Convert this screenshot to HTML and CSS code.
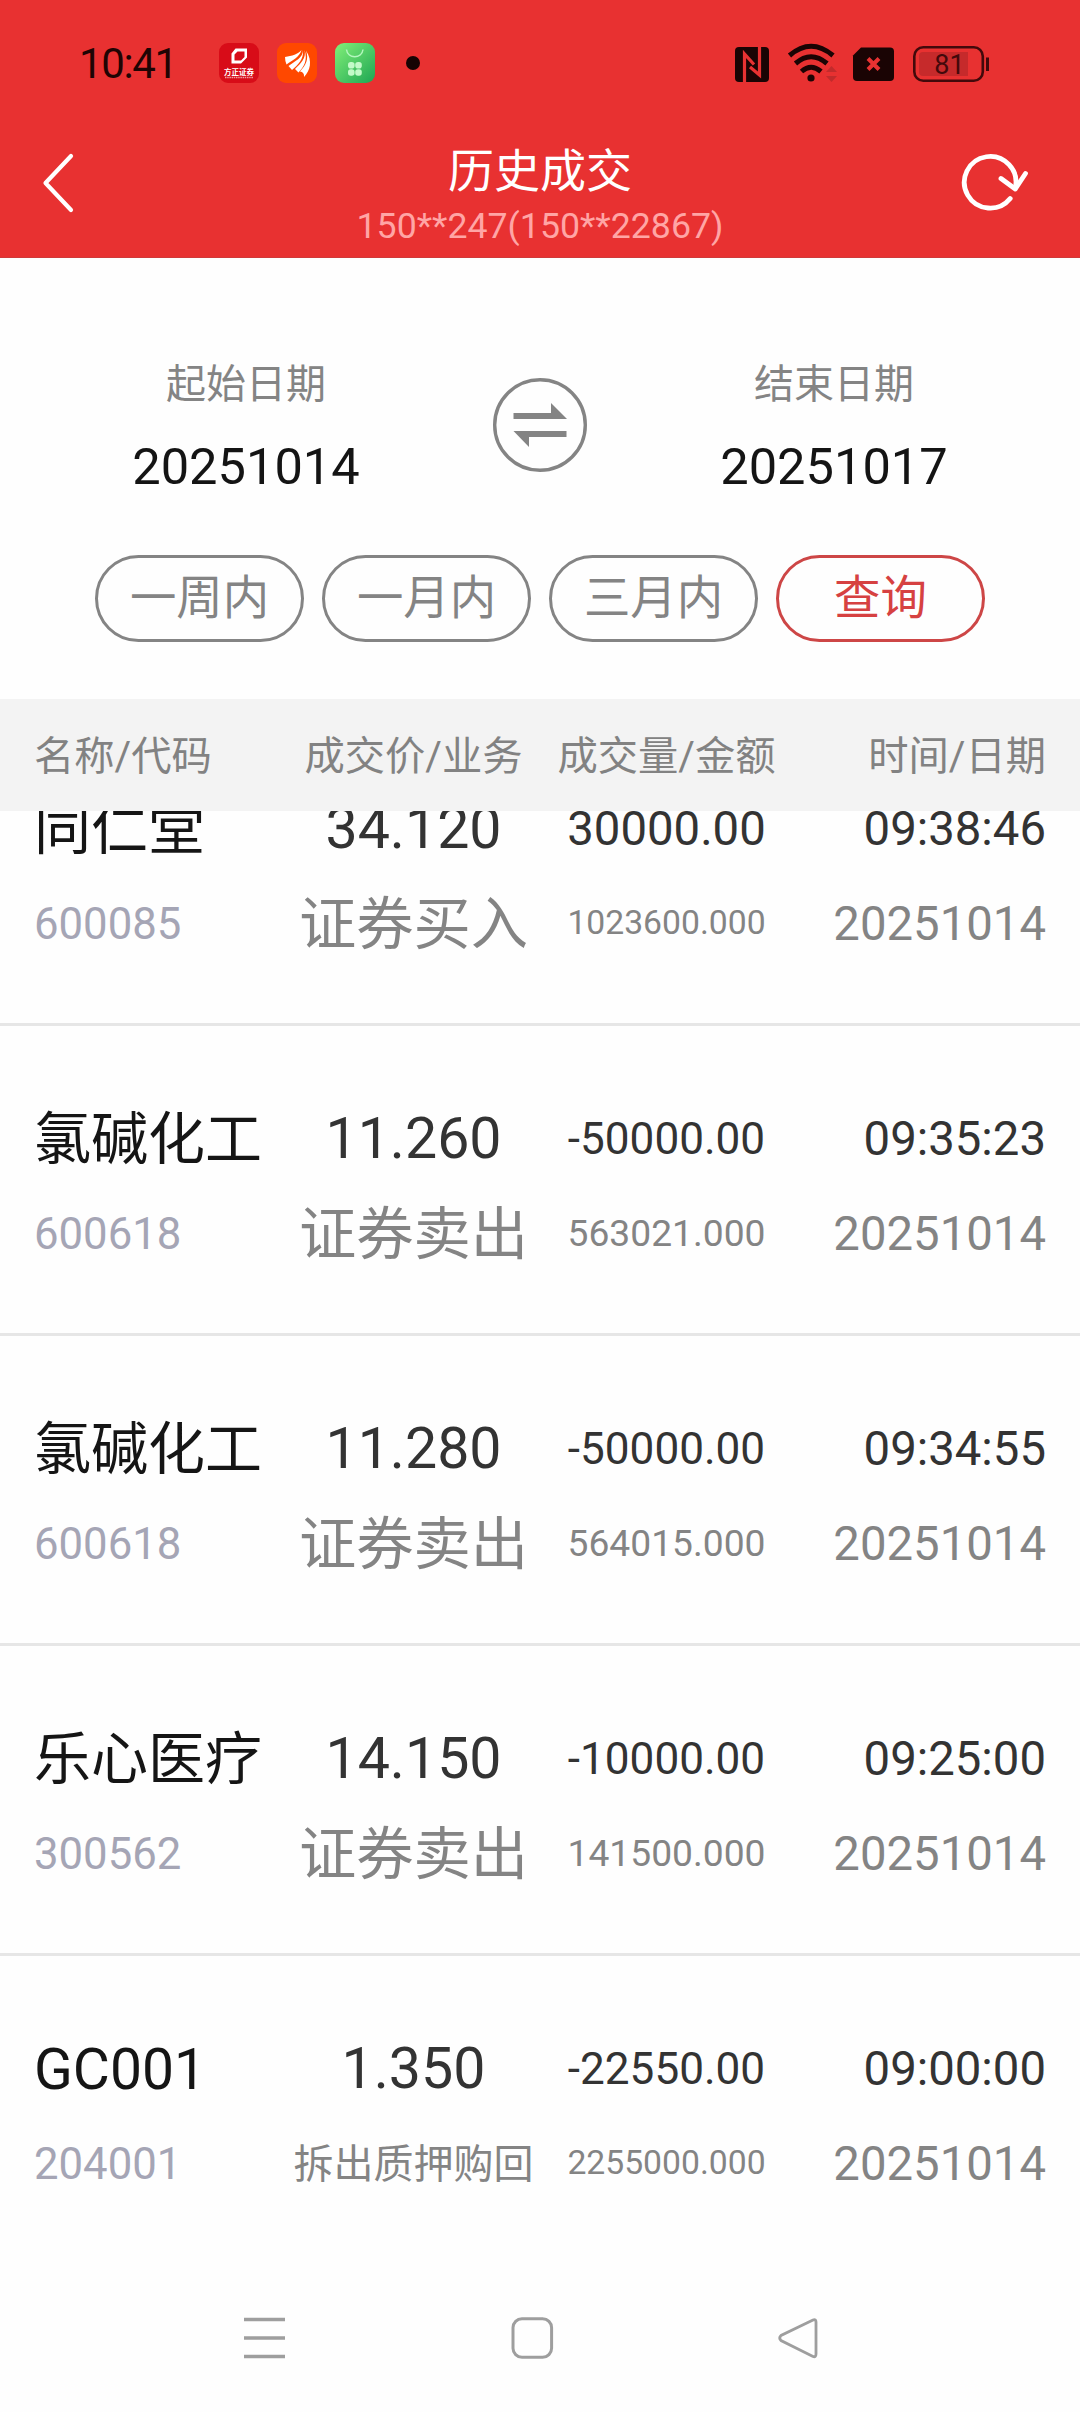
FILE: index.html
```html
<!DOCTYPE html>
<html lang="zh-CN">
<head>
<meta charset="utf-8">
<title>历史成交</title>
<link rel="stylesheet" href="styles.css">
</head>
<body>
<header class="top">
  <div class="status">
    <span class="clock">10:41</span>
    <div class="apps">
      <svg class="app" viewBox="0 0 40 40">
        <rect width="40" height="40" rx="9" fill="#d80c18"/>
        <path d="M16.500 5.500H28V14.500L22 20.500H12.500V10.500zM18.500 8.500L15.500 11.500V17.500h6.500l3.500-3.500V8.500z" fill="#fff" fill-rule="evenodd"/>
        <text x="20" y="31.500" text-anchor="middle" class="app-name">方正证券</text>
        <path d="M6 34.500h28" stroke="#fff" stroke-width="1.300" stroke-dasharray="1.500 .7" opacity=".6"/>
      </svg>
      <svg class="app" viewBox="0 0 40 40">
        <rect width="40" height="40" rx="9" fill="#ff4800"/>
        <path d="M8 14C15 13 21 11 24.500 7 22.500 14 16 17 9.500 21.500Q8 18 8 14zM26 7C26 15 18 18 11.500 23l3.500 4C21 22 27 16 26 7zM27.500 7C29.500 15 24 20 18 26l3.500 3.500C27 24 31 17 27.500 7zM29 7.500C36 18 33 28 27 34Q27.500 29 23 28.500C29 22 32 16 29 7.500z" fill="#fff"/>
      </svg>
      <svg class="app" viewBox="0 0 40 40">
        <defs><linearGradient id="leaf" x1="0" y1="0" x2="1" y2="1"><stop offset="0" stop-color="#82ef78"/><stop offset="1" stop-color="#1da653"/></linearGradient></defs>
        <rect width="40" height="40" rx="9" fill="url(#leaf)"/>
        <path d="M11.500 6.500C12.500 16 27 16 28 6.500" fill="none" stroke="#b4f7bf" stroke-width="1.500"/>
        <g fill="#c3fac8"><rect x="13" y="19" width="6.600" height="6.600" rx="2.800"/><rect x="20.200" y="19" width="6.600" height="6.600" rx="2.800"/><rect x="13" y="26.200" width="6.600" height="6.600" rx="2.800"/><rect x="20.200" y="26.200" width="6.600" height="6.600" rx="2.800"/></g>
      </svg>
    </div>
    <span class="dot"></span>
    <svg class="signals" viewBox="0 0 256 42">
      <rect x="0" y="5" width="34" height="35" rx="4" fill="#1a0404"/>
      <path d="M9.500 40V12L19 22.500M24.500 5V33L15 25" fill="none" stroke="#e83232" stroke-width="3.200"/>
      <g fill="none" stroke="#1a0404" stroke-width="5"><path d="M54.500 13.500Q76 -5 98 13.500"/><path d="M60.500 21.500Q76 8 92 21.500"/><path d="M66.500 29.500Q76 21 86 29.500"/></g>
      <circle cx="76" cy="36" r="3.600" fill="#1a0404"/>
      <path d="M91 30l5.500-6 5.500 6zM91 34l5.500 6 5.500-6z" fill="#c22b2c"/>
      <path d="M126 5.500H155q4 0 4 4V35q0 4-4 4H122q-4 0-4-4V13.500z" fill="#1a0404"/>
      <path d="M133 16.500l11 11M144 16.500l-11 11" stroke="#e83232" stroke-width="4"/>
      <rect x="179.300" y="5.300" width="68.500" height="33.400" rx="9" fill="none" stroke="#43090b" stroke-width="2.600"/>
      <path d="M188 10H233V34H188q-4 0-4-4V14q0-4 4-4z" fill="#c62a2b"/>
      <path d="M252.500 15.500V29" stroke="#43090b" stroke-width="3"/>
      <text x="214.500" y="31.800" text-anchor="middle" class="charge">81</text>
    </svg>
  </div>
  <div class="bar">
    <svg class="back" viewBox="0 0 40 64"><path d="M31 5L5.500 32 31 59" fill="none" stroke="#fff" stroke-width="4.200" stroke-linecap="round" stroke-linejoin="round"/></svg>
    <div class="heading">
      <h1>历史成交</h1>
      <p>150**247(150**22867)</p>
    </div>
    <svg class="reload" viewBox="0 0 70 64"><g fill="none" stroke="#fff" stroke-width="4.800" stroke-linecap="round" stroke-linejoin="round"><path d="M51.200 48.500A25.800 25.800 0 1 1 56.300 38"/><path d="M42 28.500L56.300 39 66.500 23.500"/></g></svg>
  </div>
</header>

<section class="filter">
  <div class="dates">
    <div class="date"><span class="label">起始日期</span><span class="value">20251014</span></div>
    <svg class="swap" viewBox="0 0 96 96"><circle cx="48" cy="48" r="45.300" fill="none" stroke="#848484" stroke-width="3.400"/><path d="M21.500 36H59V26L75 42H21.500zM74.500 54H21.500L37 70V60H74.500z" fill="#848484"/></svg>
    <div class="date"><span class="label">结束日期</span><span class="value">20251017</span></div>
  </div>
  <div class="pills">
    <button class="pill">一周内</button>
    <button class="pill">一月内</button>
    <button class="pill">三月内</button>
    <button class="pill query">查询</button>
  </div>
</section>

<div class="columns table-head">
  <span>名称/代码</span><span>成交价/业务</span><span>成交量/金额</span><span>时间/日期</span>
</div>

<main class="list">
  <article class="columns row">
    <span class="name">同仁堂</span><span class="price">34.120</span><span class="volume">30000.00</span><span class="time">09:38:46</span>
    <span class="code">600085</span><span class="kind">证券买入</span><span class="amount long">1023600.000</span><span class="day">20251014</span>
  </article>
  <article class="columns row">
    <span class="name">氯碱化工</span><span class="price">11.260</span><span class="volume signed">-50000.00</span><span class="time">09:35:23</span>
    <span class="code">600618</span><span class="kind">证券卖出</span><span class="amount">563021.000</span><span class="day">20251014</span>
  </article>
  <article class="columns row">
    <span class="name">氯碱化工</span><span class="price">11.280</span><span class="volume signed">-50000.00</span><span class="time">09:34:55</span>
    <span class="code">600618</span><span class="kind">证券卖出</span><span class="amount">564015.000</span><span class="day">20251014</span>
  </article>
  <article class="columns row">
    <span class="name">乐心医疗</span><span class="price">14.150</span><span class="volume signed">-10000.00</span><span class="time">09:25:00</span>
    <span class="code">300562</span><span class="kind">证券卖出</span><span class="amount">141500.000</span><span class="day">20251014</span>
  </article>
  <article class="columns row">
    <span class="name">GC001</span><span class="price">1.350</span><span class="volume signed">-22550.00</span><span class="time">09:00:00</span>
    <span class="code">204001</span><span class="kind small">拆出质押购回</span><span class="amount long">2255000.000</span><span class="day">20251014</span>
  </article>
</main>

<nav class="system">
  <svg viewBox="0 0 44 44"><path d="M2 3.500h41M2 22h41M2 40.500h41" stroke="#9e9e9e" stroke-width="3.400"/></svg>
  <svg viewBox="0 0 44 44"><rect x="3" y="2.700" width="38.600" height="38.600" rx="9" fill="none" stroke="#9e9e9e" stroke-width="3"/></svg>
  <svg viewBox="0 0 44 44"><path d="M36 4L4 19.500Q1.500 22 4 24.500L36 40.500Q39 41.500 39 38V6Q39 3 36 4z" fill="none" stroke="#9e9e9e" stroke-width="2.800"/></svg>
</nav>
</body>
</html>
```
FILE: styles.css
```css
* { box-sizing: border-box; }

body {
  margin: 0;
  width: 1080px;
  height: 2412px;
  display: flex;
  flex-direction: column;
  overflow: hidden;
  background: #fefefe;
  color: #161616;
  font-family: Roboto, "Noto Sans CJK SC", sans-serif;
}

svg { display: block; flex: none; }

.top {
  height: 258px;
  background: #e83131;
  border-bottom: 1px solid #cf3a3a;
}

.status {
  height: 124px;
  display: flex;
  align-items: center;
  padding: 1px 0 0 79px;
}

.clock {
  width: 140px;
  padding-top: 2px;
  font-size: 42px;
  letter-spacing: -1.4px;
  color: #1f0404;
}

.apps { display: flex; gap: 18px; }
.app { width: 40px; height: 40px; }
.app-name { font: 700 7.500px "Noto Sans CJK SC", sans-serif; fill: #fff; }

.dot {
  width: 14px;
  height: 14px;
  margin-left: 31px;
  border-radius: 50%;
  background: #170303;
}

.signals { width: 256px; height: 42px; margin-left: 315px; }
.charge { font: 27px Roboto, sans-serif; fill: #43090b; }

.bar {
  height: 133px;
  display: grid;
  grid-template-columns: 40px 1fr 70px;
  padding: 0 51px 0 40px;
  align-items: start;
}

.back { width: 40px; height: 64px; margin-top: 27px; }
.reload { width: 70px; height: 64px; margin-top: 26px; }
.heading { text-align: center; padding-left: 41px; margin-top: 14px; }

.heading h1 {
  margin: 0;
  font-size: 46px;
  font-weight: 400;
  line-height: 66px;
  color: #fff;
}

.heading p {
  margin: 0;
  font-size: 35.700px;
  line-height: 44px;
  color: #ffa5a5;
}

.filter { height: 441px; padding-top: 98px; }

.dates {
  display: grid;
  grid-template-columns: 492px 96px 492px;
}

.date {
  display: flex;
  flex-direction: column;
  align-items: center;
}

.label { font-size: 40px; line-height: 58px; color: #848484; }
.value { font-size: 50.600px; line-height: 60px; margin-top: 23px; color: #141414; }
.swap { width: 96px; height: 96px; margin-top: 21px; }

.pills {
  display: flex;
  justify-content: center;
  gap: 18px;
  margin-top: 58px;
}

.pill {
  width: 209px;
  height: 87px;
  padding: 0;
  border: 3px solid #848484;
  border-radius: 44px;
  background: none;
  color: #848484;
  font: 46.400px/81px Roboto, "Noto Sans CJK SC", sans-serif;
}

.pill.query { border-color: #cd4646; color: #d64141; }

.columns {
  display: grid;
  grid-template-columns: 253px 253px 253px 1fr;
  padding: 0 34px;
  white-space: nowrap;
  text-align: center;
}

.columns > :nth-child(4n + 1) { text-align: left; }
.columns > :nth-child(4n) { text-align: right; }

.table-head {
  height: 112px;
  background: #f3f3f3;
  color: #828282;
  font-size: 40.300px;
  line-height: 115px;
}

.list { height: 1449px; overflow: hidden; }

.row {
  height: 310px;
  grid-template-rows: 95px 95px;
  padding-top: 66px;
  border-bottom: 3px solid #e6e6e6;
  line-height: 95px;
}

.row:first-child { margin-top: -95px; }
.row:last-child { border-bottom: 0; }

.name, .price, .kind { font-size: 57.300px; }
.name { font-size: 57px; line-height: 96px; color: #151515; }
.price { line-height: 94px; }
.kind { line-height: 96px; }
.price, .volume, .time { color: #333; }
.code { font-size: 43.700px; color: #a5a5b5; }
.kind, .amount, .day { color: #848484; }
.kind.small { font-size: 40px; }
.volume, .time, .day { font-size: 47.300px; }
.volume.signed { font-size: 44.100px; }
.amount { font-size: 37.200px; line-height: 92px; }
.amount.long { font-size: 33.700px; }

.system {
  display: flex;
  justify-content: space-between;
  padding: 56px 259px 0 242px;
}

.system svg { width: 44px; height: 44px; }
```
